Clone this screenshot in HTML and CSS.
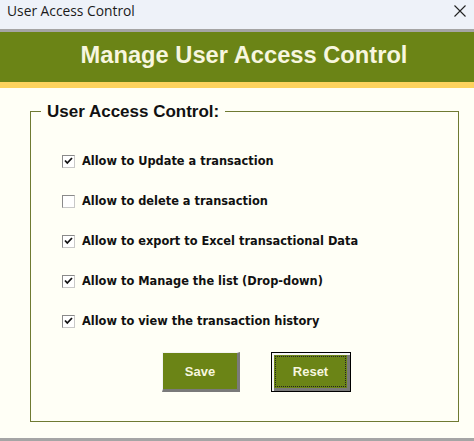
FILE: index.html
```html
<!DOCTYPE html>
<html>
<head>
<meta charset="utf-8">
<title>User Access Control</title>
<link rel="stylesheet" href="styles.css">
</head>
<body>
<div class="window">
  <div class="titlebar">
    <span class="title">User Access Control</span>
    <svg class="close" width="14" height="14" viewBox="0 0 14 14"><path d="M1.5 1.5 L12.5 12.5 M12.5 1.5 L1.5 12.5" stroke="#222" stroke-width="1.1" fill="none"/></svg>
  </div>
  <div class="sep"></div>
  <div class="header">Manage User Access Control</div>
  <div class="stripe"></div>
  <div class="content">
    <fieldset class="group">
      <legend class="legend">User Access Control:</legend>
      <div class="rows">
        <div class="row"><span class="cb checked"><svg width="9" height="8" viewBox="0 0 9 8"><path d="M1 3.5 L3.3 6 L8 1" stroke="#111" stroke-width="1.8" fill="none"/></svg></span><span class="label">Allow to Update a transaction</span></div>
        <div class="row"><span class="cb"></span><span class="label">Allow to delete a transaction</span></div>
        <div class="row"><span class="cb checked"><svg width="9" height="8" viewBox="0 0 9 8"><path d="M1 3.5 L3.3 6 L8 1" stroke="#111" stroke-width="1.8" fill="none"/></svg></span><span class="label">Allow to export to Excel transactional Data</span></div>
        <div class="row"><span class="cb checked"><svg width="9" height="8" viewBox="0 0 9 8"><path d="M1 3.5 L3.3 6 L8 1" stroke="#111" stroke-width="1.8" fill="none"/></svg></span><span class="label">Allow to Manage the list (Drop-down)</span></div>
        <div class="row"><span class="cb checked"><svg width="9" height="8" viewBox="0 0 9 8"><path d="M1 3.5 L3.3 6 L8 1" stroke="#111" stroke-width="1.8" fill="none"/></svg></span><span class="label">Allow to view the transaction history</span></div>
      </div>
      <div class="buttons">
        <button class="btn">Save</button>
        <button class="btn focused"><span class="focus">Reset</span></button>
      </div>
    </fieldset>
  </div>
  <div class="bottom"></div>
</div>
</body>
</html>
```

FILE: styles.css
```css
html, body {
  margin: 0;
  padding: 0;
  background: #fffff6;
}
.window {
  width: 474px;
  height: 441px;
  overflow: hidden;
  background: #fffff6;
  font-family: "Liberation Sans", Arial, sans-serif;
}
.titlebar {
  height: 29px;
  background: #eef2f9;
  display: flex;
  align-items: flex-start;
  justify-content: space-between;
  box-sizing: border-box;
  padding: 2px 7px 0 7px;
}
.title {
  font-family: "Open Sans", "Noto Sans", sans-serif;
  font-size: 13.8px;
  color: #1b1b1b;
  line-height: 18px;
}
.close {
  margin-top: 2px;
  margin-right: 0;
}
.sep {
  height: 3px;
  background: #a5a5a5;
}
.header {
  height: 50px;
  background: #6b8416;
  color: #f7f6df;
  font-weight: bold;
  font-size: 23.7px;
  display: flex;
  align-items: center;
  justify-content: center;
  padding-left: 14px;
  padding-bottom: 3px;
  box-sizing: border-box;
}
.stripe {
  height: 6px;
  background: #fdd35d;
}
.content {
  height: 350px;
  box-sizing: border-box;
  padding: 14px 15px 0 30px;
}
.group {
  margin: 0;
  width: 429px;
  height: 320px;
  box-sizing: border-box;
  border: 1px solid #6f7a32;
  padding: 0;
}
.legend {
  margin-left: 10px;
  padding: 0 6px;
  font-weight: bold;
  font-size: 17px;
  color: #111;
  line-height: 19px;
}
.rows {
  padding-top: 20px;
  display: flex;
  flex-direction: column;
}
.row {
  height: 40px;
  display: flex;
  align-items: center;
  padding-left: 31px;
}
.cb {
  width: 13px;
  height: 13px;
  box-sizing: border-box;
  border: 1px solid #8a8a8a;
  border-right-color: #c8c8c8;
  border-bottom-color: #c8c8c8;
  background: #fff;
  display: flex;
  align-items: center;
  justify-content: center;
  margin-right: 7px;
}
.label {
  font-family: "DejaVu Sans", Tahoma, sans-serif;
  font-weight: bold;
  font-size: 11.4px;
  color: #111;
}
.buttons {
  display: flex;
  gap: 31px;
  padding-left: 131px;
  margin-top: 11px;
}
.btn {
  width: 78px;
  height: 40px;
  box-sizing: border-box;
  background: #6b8416;
  color: #f7f6df;
  font-family: "Liberation Sans", Arial, sans-serif;
  font-weight: bold;
  font-size: 13px;
  border: 3px solid;
  border-color: #f4f4f4 #7a7a7a #7a7a7a #f4f4f4;
  border-top-width: 1px;
  border-left-width: 1px;
  padding: 0;
  margin: 0;
}
.btn.focused {
  width: 80px;
  border: 1px solid #000;
  box-shadow: inset 2px 2px 0 #f4f4f4, inset -3px -3px 0 #7a7a7a;
  padding: 3px 4px 4px 3px;
}
.focus {
  display: flex;
  align-items: center;
  justify-content: center;
  width: 100%;
  height: 100%;
  box-sizing: border-box;
  border: 1px dotted #222;
}
.bottom {
  height: 3px;
  background: #a5a5a5;
  margin-top: 0;
}
```
